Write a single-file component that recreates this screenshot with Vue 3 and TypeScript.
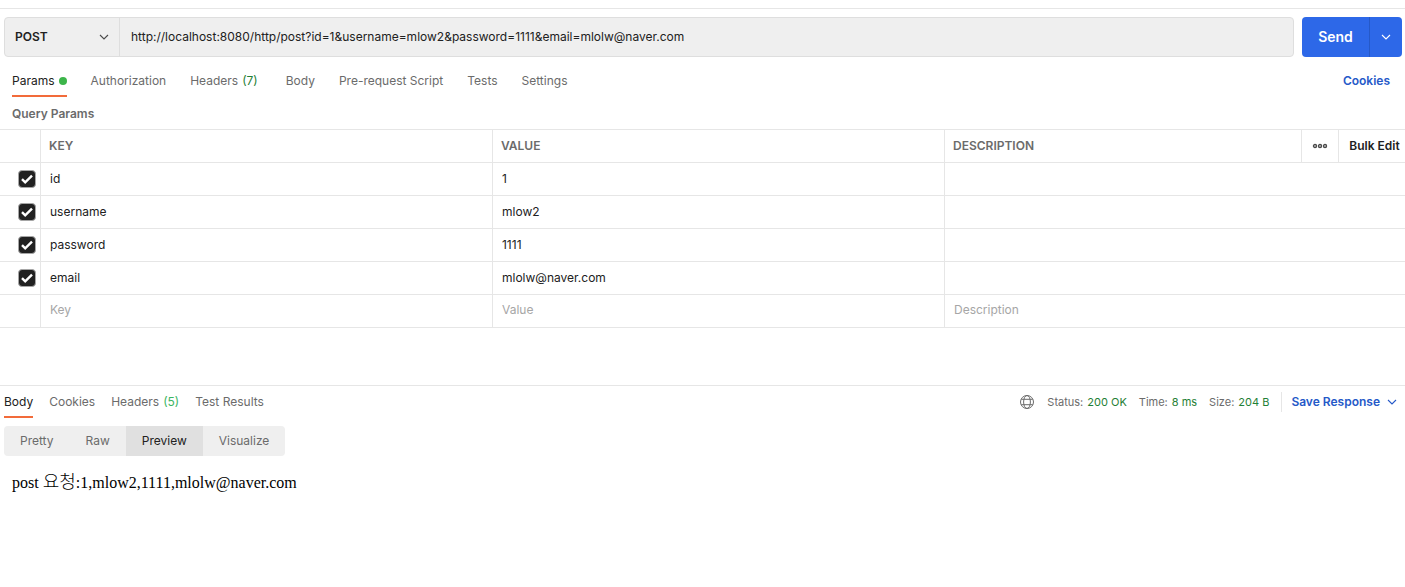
<script setup lang="ts">
import { ref } from 'vue'

interface Param {
  enabled: boolean
  key: string
  value: string
  description: string
}

interface Tab {
  label: string
  count?: number
  dot?: boolean
}

const method = ref('POST')
const methods = ['GET', 'POST', 'PUT', 'PATCH', 'DELETE']
const url = ref('http://localhost:8080/http/post?id=1&username=mlow2&password=1111&email=mlolw@naver.com')

const requestTabs: Tab[] = [
  { label: 'Params', dot: true },
  { label: 'Authorization' },
  { label: 'Headers', count: 7 },
  { label: 'Body' },
  { label: 'Pre-request Script' },
  { label: 'Tests' },
  { label: 'Settings' },
]
const activeRequestTab = ref('Params')

const params = ref<Param[]>([
  { enabled: true, key: 'id', value: '1', description: '' },
  { enabled: true, key: 'username', value: 'mlow2', description: '' },
  { enabled: true, key: 'password', value: '1111', description: '' },
  { enabled: true, key: 'email', value: 'mlolw@naver.com', description: '' },
])

const responseTabs: Tab[] = [
  { label: 'Body' },
  { label: 'Cookies' },
  { label: 'Headers', count: 5 },
  { label: 'Test Results' },
]
const activeResponseTab = ref('Body')

const stats = [
  { label: 'Status:', value: '200 OK' },
  { label: 'Time:', value: '8 ms' },
  { label: 'Size:', value: '204 B' },
]

const views = ['Pretty', 'Raw', 'Preview', 'Visualize']
const activeView = ref('Preview')
</script>

<template>
  <main class="client">
    <form class="request-bar" @submit.prevent>
      <div class="address">
        <div class="method">
          <select v-model="method" aria-label="Request method">
            <option v-for="m in methods" :key="m">{{ m }}</option>
          </select>
          <svg class="chevron" viewBox="0 0 10 6" width="10" height="6" aria-hidden="true">
            <path d="M1 1l4 4 4-4" />
          </svg>
        </div>
        <input v-model="url" class="url" type="text" aria-label="Request URL" spellcheck="false" />
      </div>
      <div class="send">
        <button type="submit" class="send-main">Send</button>
        <button type="button" class="send-more" aria-label="More send options">
          <svg class="chevron" viewBox="0 0 10 6" width="10" height="6" aria-hidden="true">
            <path d="M1 1l4 4 4-4" />
          </svg>
        </button>
      </div>
    </form>

    <nav class="tabs request-tabs" aria-label="Request">
      <button
        v-for="tab in requestTabs"
        :key="tab.label"
        type="button"
        class="tab"
        :class="{ active: tab.label === activeRequestTab, counted: tab.count }"
        @click="activeRequestTab = tab.label"
      >
        {{ tab.label }}
        <span v-if="tab.dot" class="dot"></span>
        <span v-if="tab.count" class="count">({{ tab.count }})</span>
      </button>
      <a class="cookies" href="#cookies">Cookies</a>
    </nav>

    <h2 class="section-title">Query Params</h2>

    <table class="params">
      <colgroup>
        <col class="col-check" />
        <col class="col-field" />
        <col class="col-field" />
        <col />
        <col class="col-more" />
        <col class="col-bulk" />
      </colgroup>
      <thead>
        <tr>
          <th></th>
          <th scope="col">KEY</th>
          <th scope="col">VALUE</th>
          <th scope="col">DESCRIPTION</th>
          <th class="tool">
            <button type="button" class="more" aria-label="Column options">
              <svg viewBox="0 0 16 6" width="16" height="6" aria-hidden="true">
                <circle cx="3" cy="3" r="1.5" />
                <circle cx="8" cy="3" r="1.5" />
                <circle cx="13" cy="3" r="1.5" />
              </svg>
            </button>
          </th>
          <th class="tool"><button type="button" class="bulk">Bulk Edit</button></th>
        </tr>
      </thead>
      <tbody>
        <tr v-for="param in params" :key="param.key">
          <td class="check-cell">
            <label class="check">
              <input v-model="param.enabled" type="checkbox" :aria-label="`Use ${param.key}`" />
              <svg viewBox="0 0 18 18" width="18" height="18" aria-hidden="true">
                <path d="M4 9.2l3.2 3.2L14 5.6" />
              </svg>
            </label>
          </td>
          <td><input v-model="param.key" type="text" aria-label="Key" /></td>
          <td><input v-model="param.value" type="text" aria-label="Value" /></td>
          <td colspan="3"><input v-model="param.description" type="text" aria-label="Description" /></td>
        </tr>
        <tr class="new-row">
          <td></td>
          <td><input type="text" placeholder="Key" aria-label="New key" /></td>
          <td><input type="text" placeholder="Value" aria-label="New value" /></td>
          <td colspan="3"><input type="text" placeholder="Description" aria-label="New description" /></td>
        </tr>
      </tbody>
    </table>

    <section class="response">
      <header class="response-head">
        <nav class="tabs response-tabs" aria-label="Response">
          <button
            v-for="tab in responseTabs"
            :key="tab.label"
            type="button"
            class="tab"
            :class="{ active: tab.label === activeResponseTab }"
            @click="activeResponseTab = tab.label"
          >
            {{ tab.label }}
            <span v-if="tab.count" class="count">({{ tab.count }})</span>
          </button>
        </nav>
        <div class="meta">
          <svg class="globe" viewBox="0 0 16 16" width="16" height="16" aria-hidden="true">
            <circle cx="8" cy="8" r="6.5" />
            <ellipse cx="8" cy="8" rx="3.4" ry="6.5" />
            <path d="M2.2 5.3h11.6M2.2 10.7h11.6" />
          </svg>
          <span v-for="stat in stats" :key="stat.label" class="stat">
            {{ stat.label }} <b>{{ stat.value }}</b>
          </span>
          <button type="button" class="save">
            Save Response
            <svg class="chevron" viewBox="0 0 10 6" width="10" height="6" aria-hidden="true">
              <path d="M1 1l4 4 4-4" />
            </svg>
          </button>
        </div>
      </header>

      <div class="views">
        <button
          v-for="view in views"
          :key="view"
          type="button"
          :class="{ active: view === activeView }"
          @click="activeView = view"
        >
          {{ view }}
        </button>
      </div>

      <p class="preview">post <span lang="ko">요청</span>:1,mlow2,1111,mlolw@naver.com</p>
    </section>
  </main>
</template>

<style>
body {
  margin: 0;
  background: #fff;
}
</style>

<style scoped>
.client {
  margin-top: 8px;
  border-top: 1px solid #e6e6e6;
  font: 12px/16px Inter, "Liberation Sans", sans-serif;
  color: #212121;
}

button,
input,
select {
  margin: 0;
  padding: 0;
  border: 0;
  background: none;
  color: inherit;
  font: inherit;
  outline: none;
}

button {
  cursor: pointer;
  white-space: nowrap;
}

.chevron {
  fill: none;
  stroke: currentColor;
  stroke-width: 1.1;
  flex: none;
}

.request-bar {
  display: flex;
  gap: 8px;
  padding: 8px 3px 0 4px;
}

.address {
  display: flex;
  flex: 1;
  box-sizing: border-box;
  height: 40px;
  border: 1px solid #dedede;
  border-radius: 4px;
  background: #efefef;
}

.method {
  display: grid;
  grid-template-columns: 1fr 20px;
  align-items: center;
  width: 114px;
  border-right: 1px solid #dedede;
}

.method select {
  grid-area: 1 / 1 / 2 / 3;
  height: 100%;
  padding-left: 10px;
  appearance: none;
  font-weight: 600;
}

.method .chevron {
  grid-area: 1 / 2;
  color: #4a4a4a;
  pointer-events: none;
}

.url {
  flex: 1;
  min-width: 0;
  padding: 0 11px;
}

.send {
  display: flex;
  height: 40px;
  border-radius: 4px;
  overflow: hidden;
  background: #2d68e8;
  color: #fff;
}

.send-main {
  width: 67px;
  font-size: 14px;
  font-weight: 600;
}

.send-more {
  display: flex;
  align-items: center;
  justify-content: center;
  width: 33px;
  border-left: 1px solid #2559c8;
}

.tabs {
  display: flex;
}

.tab {
  display: flex;
  align-items: center;
  gap: 4px;
  height: 32px;
  padding-top: 2px;
  border-bottom: 2px solid transparent;
  box-sizing: border-box;
  color: #6b6b6b;
}

.tab.active {
  border-color: #f26b3a;
  color: #212121;
}

.request-tabs {
  gap: 24px;
  padding: 8px 15px 0 12px;
}

.request-tabs .counted {
  padding-right: 4px;
}

.dot {
  width: 8px;
  height: 8px;
  border-radius: 50%;
  background: #3cb54a;
}

.count {
  color: #1f8036;
}

.cookies {
  margin-left: auto;
  line-height: 32px;
  color: #2559c8;
  font-weight: 600;
  text-decoration: none;
}

.section-title {
  margin: 0;
  padding: 9px 12px 7px;
  font-size: 12px;
  line-height: 16px;
  font-weight: 600;
  color: #6b6b6b;
}

.params {
  width: 100%;
  table-layout: fixed;
  border-collapse: separate;
  border-spacing: 0;
  border-top: 1px solid #e6e6e6;
}

.col-check {
  width: 41px;
}

.col-field {
  width: 32.17%;
}

.col-more {
  width: 37px;
}

.col-bulk {
  width: 66px;
}

.params th,
.params td {
  height: 32px;
  padding: 0;
  border-right: 1px solid #e6e6e6;
  border-bottom: 1px solid #e6e6e6;
  text-align: left;
}

.params th:last-child,
.params td:last-child {
  border-right: 0;
}

.params th {
  padding-left: 8px;
  color: #6b6b6b;
  font-weight: 600;
}

.params .tool {
  padding: 0;
  text-align: center;
}

.params input[type="text"] {
  display: block;
  box-sizing: border-box;
  width: 100%;
  height: 32px;
  padding: 0 9px 2px;
}

.params .new-row input[type="text"] {
  padding-bottom: 4px;
}

.params input::placeholder {
  color: #a6a6a6;
  opacity: 1;
}

.more {
  display: flex;
  justify-content: center;
  width: 100%;
}

.more svg {
  fill: none;
  stroke: #4a4a4a;
  stroke-width: 1.4;
}

.bulk {
  padding-left: 5px;
  color: #212121;
}

.params .check-cell {
  padding-left: 18px;
}

.check {
  position: relative;
  display: block;
  width: 18px;
  height: 18px;
}

.check input {
  display: block;
  box-sizing: border-box;
  width: 18px;
  height: 18px;
  appearance: none;
  border: 1px solid #a6a6a6;
  border-radius: 4px;
}

.check input:checked {
  background: #212121;
}

.check svg {
  position: absolute;
  inset: 0;
  fill: none;
  stroke: #fff;
  stroke-width: 2.4;
  pointer-events: none;
}

.response {
  margin-top: 57px;
  border-top: 1px solid #e6e6e6;
}

.response-head {
  display: flex;
  justify-content: space-between;
  padding: 0 8px 0 4px;
}

.response-tabs {
  gap: 16px;
}

.response-tabs .count {
  color: #3cb562;
}

.meta {
  display: flex;
  align-items: center;
  gap: 12px;
  font-size: 11px;
  color: #6b6b6b;
}

.globe {
  fill: none;
  stroke: #6b6b6b;
}

.stat {
  display: flex;
  gap: 4px;
}

.stat b {
  color: #1f8036;
  font-weight: 400;
}

.save {
  display: flex;
  align-items: center;
  gap: 7px;
  height: 20px;
  padding-left: 9px;
  border-left: 1px solid #e6e6e6;
  color: #2559c8;
  font-size: 12px;
  font-weight: 600;
}

.views {
  display: inline-flex;
  margin: 8px 4px 0;
  border-radius: 4px;
  overflow: hidden;
  background: #efefef;
}

.views button {
  height: 30px;
  padding: 0 16px;
  color: #6b6b6b;
}

.views .active {
  background: #e0e0e0;
  color: #212121;
}

.preview {
  margin: 17px 12px;
  color: #000;
  font: 16px/20px "Liberation Serif", "Noto Sans CJK KR", serif;
}

.preview span {
  font-size: 18px;
  font-weight: 300;
  line-height: 16px;
}
</style>
